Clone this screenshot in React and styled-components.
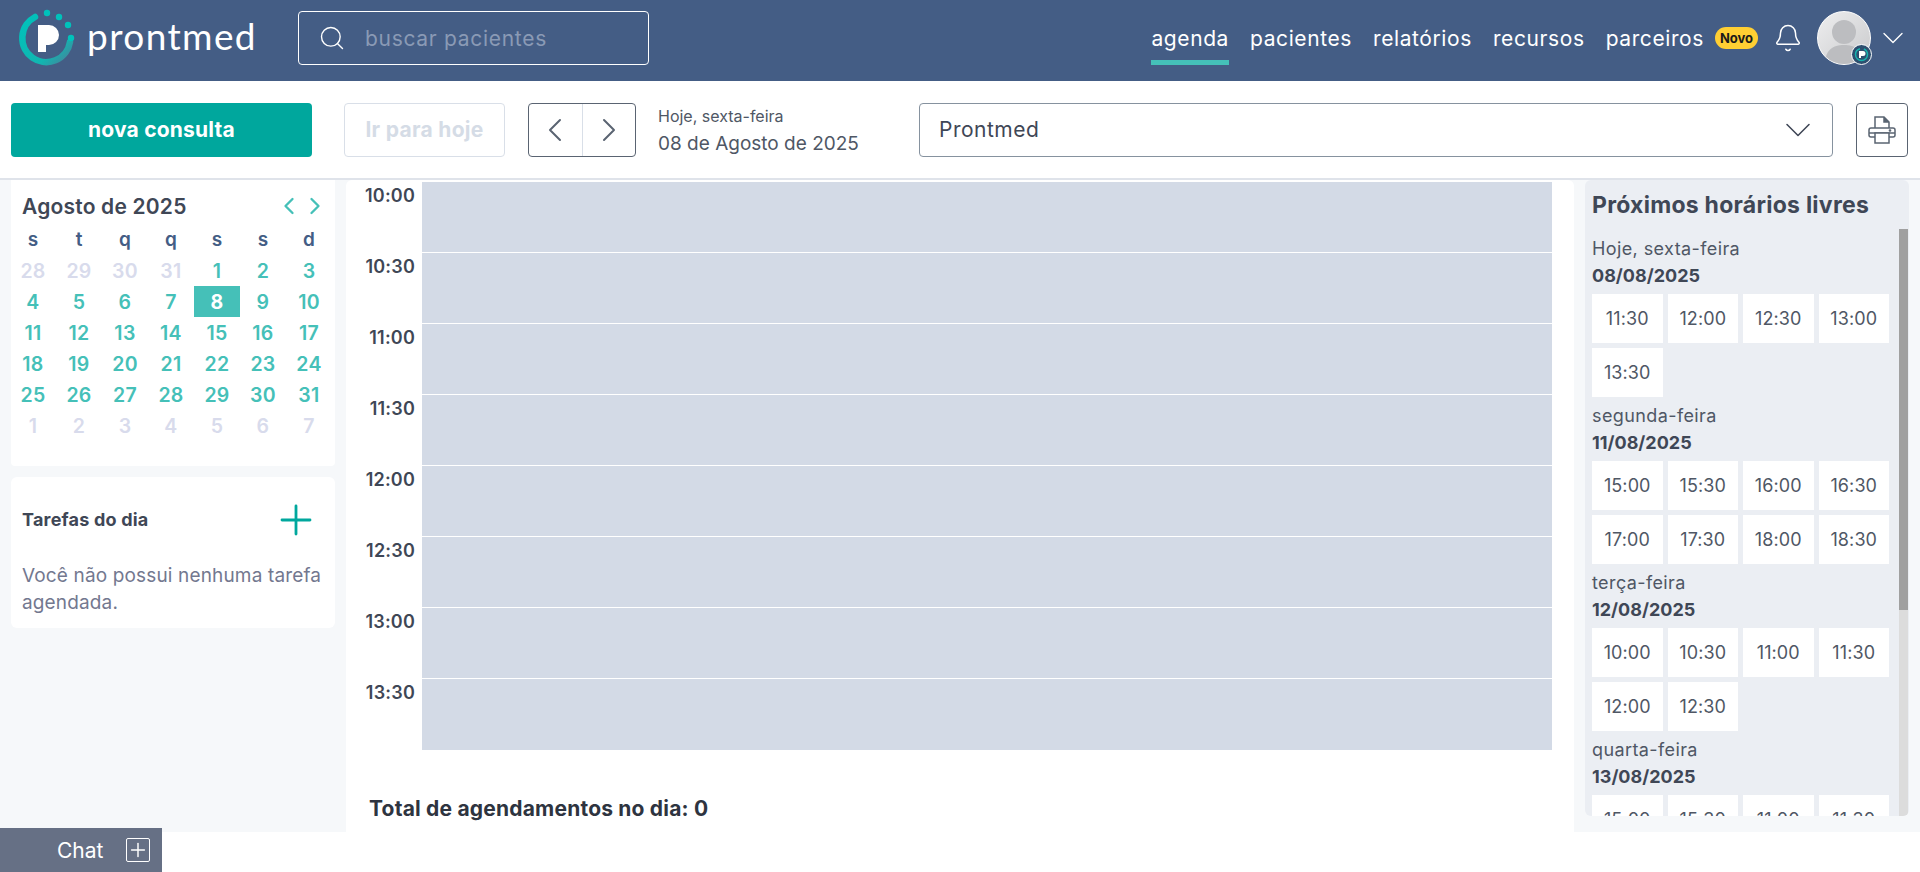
import React from 'react';
import styled, { createGlobalStyle } from 'styled-components';
import { ChevronLeft, ChevronRight, ChevronDown, Search, Bell, Plus } from 'lucide-react';

const GlobalStyle = createGlobalStyle`
  html, body { margin: 0; padding: 0; height: 100%; background: #fff; overflow: hidden; }
  * { box-sizing: border-box; }
  body { font-family: Inter, "Open Sans", sans-serif; color: #3f4756; }
`;

const Page = styled.div`
  width: 1920px;
  height: 872px;
  display: flex;
  flex-direction: column;
`;

const Header = styled.header`
  height: 81px;
  padding-bottom: 5px;
  background: #445d85;
  display: flex;
  align-items: center;
  flex-shrink: 0;
`;

const Brand = styled.div`
  width: 298px;
  height: 100%;
  padding-left: 18px;
  display: flex;
  align-items: center;
  gap: 11px;
`;

const BrandName = styled.span`
  font-family: Lato, sans-serif;
  font-size: 37px;
  font-weight: 400;
  letter-spacing: 1.4px;
  color: #fff;
  line-height: 1;
  margin-top: -6px;
`;

const SearchBox = styled.div`
  width: 351px;
  height: 54px;
  border: 1px solid #fff;
  border-radius: 4px;
  display: flex;
  align-items: center;
  padding-left: 19px;
  gap: 19px;
  color: #fff;
`;

const SearchText = styled.span`
  font-size: 21px;
  letter-spacing: 0.7px;
  color: #8a9ab5;
`;

const Nav = styled.nav`
  margin-left: auto;
  height: 54px;
  display: flex;
  align-items: stretch;
  gap: 21px;
`;

const NavItem = styled.a`
  font-size: 21px;
  letter-spacing: 0.6px;
  color: #fff;
  display: flex;
  align-items: center;
  border-bottom: 5px solid ${p => (p.$active ? '#45c0b8' : 'transparent')};
  padding-top: 5px;
`;

const Badge = styled.span`
  width: 43px;
  height: 22px;
  border-radius: 11px;
  background: #ffcf33;
  color: #1a1a1a;
  font-size: 13px;
  font-weight: 700;
  display: flex;
  align-items: center;
  justify-content: center;
  margin: 0 15px 0 11px;
`;

const HeaderIcons = styled.div`
  display: flex;
  align-items: center;
  color: #fff;
  padding-right: 9px;
`;

const Avatar = styled.div`
  position: relative;
  width: 54px;
  height: 54px;
  margin: 0 4px 0 14px;
  border-radius: 50%;
  border: 1px solid #fff;
  background: linear-gradient(135deg, #eeeeef, #c9cacc);
`;

const AvatarBadge = styled.div`
  position: absolute;
  right: -2px;
  bottom: -1px;
  width: 21px;
  height: 21px;
  border-radius: 50%;
  border: 1px solid #fff;
  background: #2d4f6f;
  display: flex;
  align-items: center;
  justify-content: center;
`;

const Toolbar = styled.div`
  height: 99px;
  flex-shrink: 0;
  padding: 0 12px 0 11px;
  display: flex;
  align-items: center;
  border-bottom: 2px solid #dfe3ea;
`;

const PrimaryButton = styled.button`
  width: 301px;
  height: 54px;
  border: 0;
  border-radius: 4px;
  background: #00a79d;
  color: #fff;
  font: 700 21px Inter, sans-serif;
  letter-spacing: 0.2px;
  margin-right: 32px;
`;

const TodayButton = styled.button`
  width: 161px;
  height: 54px;
  background: #fff;
  border: 1px solid #d9dfe8;
  border-radius: 4px;
  color: #d5dce6;
  font: 700 21px Inter, sans-serif;
  letter-spacing: 0.3px;
  margin-right: 23px;
`;

const ArrowGroup = styled.div`
  width: 108px;
  height: 54px;
  border: 1px solid #5a6472;
  border-radius: 4px;
  display: flex;
  margin-right: 22px;
`;

const ArrowCell = styled.div`
  flex: 1;
  display: flex;
  align-items: center;
  justify-content: center;
  color: #5a6472;
  border-left: ${p => (p.$divider ? '1px solid #d9dfe8' : '0')};
`;

const DateBlock = styled.div`
  width: 261px;
  padding-top: 3px;
  display: flex;
  flex-direction: column;
  gap: 6px;
`;

const DateSmall = styled.div`
  font-size: 16px;
  line-height: 19px;
  color: #4f5765;
`;

const DateLarge = styled.div`
  font-size: 19px;
  line-height: 23px;
  color: #4f5765;
`;

const SelectBox = styled.div`
  width: 914px;
  height: 54px;
  border: 1px solid #86929f;
  border-radius: 4px;
  display: flex;
  align-items: center;
  justify-content: space-between;
  padding: 0 12px 0 19px;
  font-size: 21px;
  letter-spacing: 0.5px;
  color: #3f4756;
  margin-right: 23px;
`;

const PrintButton = styled.div`
  width: 52px;
  height: 54px;
  border: 1px solid #5a6472;
  border-radius: 4px;
  display: flex;
  align-items: center;
  justify-content: center;
`;

const Content = styled.main`
  height: 652px;
  display: flex;
  flex-shrink: 0;
  background: #f6f8fa;
`;

const LeftColumn = styled.aside`
  width: 346px;
  padding: 0 11px;
  display: flex;
  flex-direction: column;
  gap: 11px;
`;

const CalendarCard = styled.section`
  height: 286px;
  background: #fff;
  border-radius: 0 0 4px 4px;
  padding-top: 11px;
`;

const CalendarTop = styled.div`
  height: 30px;
  padding: 0 6px 0 11px;
  display: flex;
  align-items: center;
  justify-content: space-between;
  color: #45c0b8;
`;

const CalendarTitle = styled.h2`
  margin: 0;
  font-size: 21px;
  font-weight: 600;
  letter-spacing: 0.2px;
  color: #3f4756;
`;

const CalendarArrows = styled.div`
  display: flex;
  & > svg + svg { margin-left: -2px; }
`;

const CalendarGrid = styled.div`
  display: grid;
  grid-template-columns: repeat(7, 46px);
  grid-auto-rows: 31px;
  margin: 3px 0 0 -1px;
`;

const DayHead = styled.div`
  display: flex;
  align-items: center;
  justify-content: center;
  font-size: 19px;
  font-weight: 600;
  color: #445d85;
`;

const Day = styled.div`
  display: flex;
  align-items: center;
  justify-content: center;
  font-size: 19.5px;
  font-weight: ${p => (p.$selected ? 700 : 600)};
  letter-spacing: 0.3px;
  color: ${p => (p.$selected ? '#fff' : p.$muted ? '#d8dbec' : '#45c0b8')};
  background: ${p => (p.$selected ? '#45c0b8' : 'transparent')};
`;

const TaskCard = styled.section`
  height: 151px;
  background: #fff;
  border-radius: 6px;
  padding: 0 11px;
`;

const TaskHead = styled.div`
  height: 85px;
  display: flex;
  align-items: center;
  justify-content: space-between;
  color: #00a79d;
  padding-right: 4px;
`;

const TaskTitle = styled.h3`
  margin: 0;
  font-size: 18px;
  font-weight: 700;
  letter-spacing: 0.2px;
  color: #3f4756;
`;

const TaskEmpty = styled.p`
  margin: 0;
  font-size: 19px;
  line-height: 27px;
  letter-spacing: 0.15px;
  color: #73788f;
`;

const Schedule = styled.section`
  width: 1228px;
  background: #fff;
  border-radius: 6px 6px 0 0;
  padding: 2px 22px 0 0;
  display: flex;
  flex-direction: column;
`;

const Row = styled.div`
  height: 71px;
  display: flex;
`;

const TimeLabel = styled.div`
  width: 76px;
  padding: 3px 7px 0 0;
  text-align: right;
  font-size: 18px;
  font-weight: 600;
  letter-spacing: 0.2px;
  color: #3f4756;
`;

const Slot = styled.div`
  flex: 1;
  background: #d3dae6;
  border-bottom: ${p => (p.$last ? '0' : '1px solid #fff')};
`;

const Total = styled.div`
  margin: 46px 0 0 23px;
  font-size: 21px;
  font-weight: 700;
  letter-spacing: 0.2px;
  color: #2e3440;
`;

const RightColumn = styled.aside`
  flex: 1;
  padding: 0 11px 16px;
  display: flex;
`;

const FreePanel = styled.section`
  width: 324px;
  background: #ebeef3;
  border-radius: 6px;
  padding-right: 1px;
  display: flex;
  flex-direction: column;
  min-height: 0;
  overflow: hidden;
`;

const FreeTitle = styled.h2`
  margin: 0;
  height: 49px;
  padding: 8px 0 0 7px;
  font-size: 23px;
  line-height: 34px;
  font-weight: 700;
  letter-spacing: 0.25px;
  color: #3f4756;
  flex-shrink: 0;
`;

const FreeBody = styled.div`
  flex: 1;
  min-height: 0;
  display: flex;
`;

const FreeList = styled.div`
  flex: 1;
  min-width: 0;
  overflow: hidden;
  padding: 7px 10px 0 7px;
`;

const ScrollTrack = styled.div`
  width: 9px;
  flex-shrink: 0;
  background: #dcdcdc;
`;

const ScrollThumb = styled.div`
  height: 381px;
  background: #a0a0a0;
`;

const FreeDay = styled.div`
  font-size: 18px;
  line-height: 26px;
  letter-spacing: 0.4px;
  color: #4f5765;
`;

const FreeDate = styled.div`
  font-size: 18px;
  line-height: 26px;
  padding-top: 1px;
  font-weight: 700;
  color: #3f4756;
`;

const SlotGrid = styled.div`
  display: grid;
  grid-template-columns: repeat(4, 1fr);
  grid-auto-rows: 49px;
  gap: 5px;
  margin: 5px 0 6px;
`;

const SlotButton = styled.div`
  background: #fff;
  display: flex;
  align-items: center;
  justify-content: center;
  font-size: 18px;
  letter-spacing: 0.1px;
  color: #4f5765;
`;

const ChatBar = styled.div`
  position: fixed;
  left: 0;
  bottom: 0;
  width: 162px;
  height: 44px;
  background: #667085;
  color: #fff;
  display: flex;
  align-items: center;
  font-size: 21px;
  padding-left: 57px;
  gap: 23px;
`;

const ChatPlus = styled.div`
  width: 24px;
  height: 24px;
  border: 1.5px solid #fff;
  border-radius: 2px;
  display: flex;
  align-items: center;
  justify-content: center;
  flex-shrink: 0;
`;

const Logo = () => (
  <svg width="58" height="58" viewBox="0 0 58 58">
    <defs>
      <linearGradient id="ring" x1="0" y1="0" x2="1" y2="1">
        <stop offset="0" stopColor="#00c2bb" />
        <stop offset="0.7" stopColor="#12b5b0" />
        <stop offset="1" stopColor="#4a7f9a" />
      </linearGradient>
    </defs>
    <path d="M17 8 A24 24 0 1 0 52 33" fill="none" stroke="url(#ring)" strokeWidth="6.5" strokeLinecap="round" />
    <circle cx="29" cy="4" r="3.2" fill="#00c2bb" />
    <circle cx="41" cy="8" r="3.2" fill="#00c2bb" />
    <circle cx="50" cy="16" r="3.2" fill="#00c2bb" />
    <circle cx="53" cy="29" r="3.2" fill="#00c2bb" />
    <path d="M20 16 H31 A10 10 0 0 1 31 36 H28 V43 H20 Z" fill="#fff" />
  </svg>
);

const MiniLogo = () => (
  <svg width="15" height="15" viewBox="0 0 15 15">
    <circle cx="7.5" cy="7.5" r="6" fill="none" stroke="#17b3ae" strokeWidth="1.5" strokeDasharray="26 4" />
    <path d="M5 4 H9 A2.3 2.3 0 0 1 9 9 H7 V11 H5 Z" fill="#fff" />
  </svg>
);

const AvatarFigure = () => (
  <svg width="52" height="52" viewBox="0 0 52 52">
    <defs>
      <clipPath id="avatar-clip"><circle cx="26" cy="26" r="26" /></clipPath>
    </defs>
    <g clipPath="url(#avatar-clip)" fill="#bcbdc0">
      <circle cx="26" cy="20" r="12" />
      <path d="M7 52 C7 38 15 33 26 33 C37 33 45 38 45 52 Z" />
    </g>
  </svg>
);

const PrinterIcon = () => (
  <svg width="28" height="28" viewBox="0 0 28 28" fill="none" stroke="#5a6472" strokeWidth="1.5">
    <path d="M7 12 V1 H16 L21 6 V12" />
    <path d="M16 1 V6 H21" fill="#5a6472" />
    <path d="M7 21 H3 A2 2 0 0 1 1 19 V14 A2 2 0 0 1 3 12 H25 A2 2 0 0 1 27 14 V19 A2 2 0 0 1 25 21 H21" />
    <path d="M1 17 H27" />
    <rect x="7" y="17" width="14" height="10" fill="#fff" />
    <circle cx="22" cy="14.5" r="0.6" fill="#5a6472" />
  </svg>
);

const navItems = ['agenda', 'pacientes', 'relatórios', 'recursos', 'parceiros'];
const weekDays = ['s', 't', 'q', 'q', 's', 's', 'd'];

const days = [
  ...[28, 29, 30, 31].map(n => ({ n, muted: true })),
  ...Array.from({ length: 31 }, (_, i) => ({ n: i + 1 })),
  ...[1, 2, 3, 4, 5, 6, 7].map(n => ({ n, muted: true })),
];

const times = ['10:00', '10:30', '11:00', '11:30', '12:00', '12:30', '13:00', '13:30'];

const freeSlots = [
  { day: 'Hoje, sexta-feira', date: '08/08/2025', slots: ['11:30', '12:00', '12:30', '13:00', '13:30'] },
  { day: 'segunda-feira', date: '11/08/2025', slots: ['15:00', '15:30', '16:00', '16:30', '17:00', '17:30', '18:00', '18:30'] },
  { day: 'terça-feira', date: '12/08/2025', slots: ['10:00', '10:30', '11:00', '11:30', '12:00', '12:30'] },
  { day: 'quarta-feira', date: '13/08/2025', slots: ['15:00', '15:30', '11:00', '11:30'] },
];

const App = () => {
  return (
    <Page>
      <GlobalStyle />
      <Header>
        <Brand>
          <Logo />
          <BrandName>prontmed</BrandName>
        </Brand>
        <SearchBox>
          <Search size={28} strokeWidth={1.2} />
          <SearchText>buscar pacientes</SearchText>
        </SearchBox>
        <Nav>
          {navItems.map((item, i) => (
            <NavItem key={item} $active={i === 0}>{item}</NavItem>
          ))}
        </Nav>
        <HeaderIcons>
          <Badge>Novo</Badge>
          <Bell size={30} strokeWidth={1.2} />
          <Avatar>
            <AvatarFigure />
            <AvatarBadge><MiniLogo /></AvatarBadge>
          </Avatar>
          <ChevronDown size={36} strokeWidth={0.9} />
        </HeaderIcons>
      </Header>

      <Toolbar>
        <PrimaryButton>nova consulta</PrimaryButton>
        <TodayButton>Ir para hoje</TodayButton>
        <ArrowGroup>
          <ArrowCell><ChevronLeft size={40} strokeWidth={1.2} /></ArrowCell>
          <ArrowCell $divider><ChevronRight size={40} strokeWidth={1.2} /></ArrowCell>
        </ArrowGroup>
        <DateBlock>
          <DateSmall>Hoje, sexta-feira</DateSmall>
          <DateLarge>08 de Agosto de 2025</DateLarge>
        </DateBlock>
        <SelectBox>
          Prontmed
          <ChevronDown size={44} strokeWidth={0.85} />
        </SelectBox>
        <PrintButton><PrinterIcon /></PrintButton>
      </Toolbar>

      <Content>
        <LeftColumn>
          <CalendarCard>
            <CalendarTop>
              <CalendarTitle>Agosto de 2025</CalendarTitle>
              <CalendarArrows>
                <ChevronLeft size={28} strokeWidth={2} />
                <ChevronRight size={28} strokeWidth={2} />
              </CalendarArrows>
            </CalendarTop>
            <CalendarGrid>
              {weekDays.map((d, i) => <DayHead key={i}>{d}</DayHead>)}
              {days.map((d, i) => (
                <Day key={i} $muted={d.muted} $selected={!d.muted && d.n === 8}>{d.n}</Day>
              ))}
            </CalendarGrid>
          </CalendarCard>
          <TaskCard>
            <TaskHead>
              <TaskTitle>Tarefas do dia</TaskTitle>
              <Plus size={48} strokeWidth={1.4} />
            </TaskHead>
            <TaskEmpty>Você não possui nenhuma tarefa agendada.</TaskEmpty>
          </TaskCard>
        </LeftColumn>

        <Schedule>
          {times.map((t, i) => (
            <Row key={t}>
              <TimeLabel>{t}</TimeLabel>
              <Slot $last={i === times.length - 1} />
            </Row>
          ))}
          <Total>Total de agendamentos no dia: 0</Total>
        </Schedule>

        <RightColumn>
          <FreePanel>
            <FreeTitle>Próximos horários livres</FreeTitle>
            <FreeBody>
              <FreeList>
                {freeSlots.map(group => (
                  <div key={group.date}>
                    <FreeDay>{group.day}</FreeDay>
                    <FreeDate>{group.date}</FreeDate>
                    <SlotGrid>
                      {group.slots.map(s => <SlotButton key={s}>{s}</SlotButton>)}
                    </SlotGrid>
                  </div>
                ))}
              </FreeList>
              <ScrollTrack><ScrollThumb /></ScrollTrack>
            </FreeBody>
          </FreePanel>
        </RightColumn>
      </Content>

      <ChatBar>
        Chat
        <ChatPlus><Plus size={22} strokeWidth={1.6} /></ChatPlus>
      </ChatBar>
    </Page>
  );
};

export default App;
